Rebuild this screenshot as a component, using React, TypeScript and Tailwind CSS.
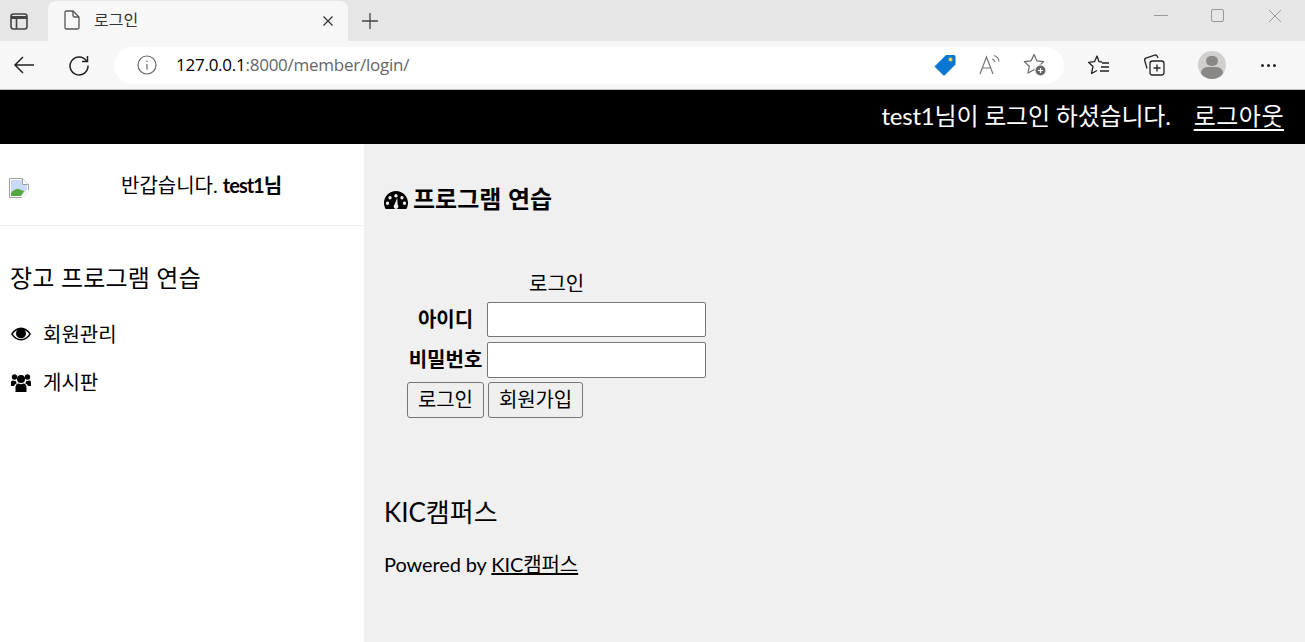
const latin = "font-['Lato','Noto_Sans_CJK_KR',sans-serif]";
const ui = "font-['Open_Sans','Noto_Sans_CJK_KR',sans-serif]";
const plain = "font-['Liberation_Sans','Noto_Sans_CJK_KR',sans-serif]";

const TabStrip = () => (
  <div className="h-[41px] bg-[#e6e6e6] flex items-end">
    <div className="w-12 h-[41px] flex items-center pl-[9px]">
      <svg width="20" height="20" viewBox="0 0 20 20" fill="none" stroke="#444" strokeWidth="1.6">
        <rect x="2" y="3" width="16" height="15" rx="2.5" />
        <path d="M2 6.5h16" strokeWidth="3" />
        <path d="M7.5 7v11" />
      </svg>
    </div>
    <div className="w-[300px] h-[40px] bg-[#f7f7f7] rounded-t-lg flex items-center">
      <svg className="ml-[15px] mb-[2px]" width="18" height="20" viewBox="0 0 18 20" fill="none" stroke="#555" strokeWidth="1.3">
        <path d="M2 2.5a1.5 1.5 0 0 1 1.5-1.5h6.5l6 6v10.500a1.500 1.500 0 0 1-1.500 1.500h-11a1.500 1.500 0 0 1-1.500-1.500z" />
        <path d="M10 1v4.500a1.500 1.500 0 0 0 1.500 1.500h4.500" />
      </svg>
      <span className={`ml-[13px] text-[16px] text-[#333] ${plain}`}>로그인</span>
      <svg className="ml-auto mr-[14px]" width="12" height="12" viewBox="0 0 12 12" stroke="#333" strokeWidth="1.2">
        <path d="M1.500 1.500l9 9M10.500 1.500l-9 9" />
      </svg>
    </div>
    <div className="w-[44px] h-[41px] flex items-center justify-center">
      <svg width="18" height="18" viewBox="0 0 18 18" stroke="#444" strokeWidth="1.3">
        <path d="M9 1v16M1 9h16" />
      </svg>
    </div>
    <div className="ml-auto h-[41px] flex items-start pr-[2px]">
      <div className="w-[57px] h-[31px] flex items-center justify-center">
        <div className="w-[14px] h-px bg-[#999]" />
      </div>
      <div className="w-[57px] h-[31px] flex items-center justify-center">
        <div className="w-[13px] h-[13px] border border-[#999] rounded-[2px]" />
      </div>
      <div className="w-[57px] h-[31px] flex items-center justify-center">
        <svg width="14" height="14" viewBox="0 0 14 14" stroke="#999" strokeWidth="1">
          <path d="M1 1l12 12M13 1L1 13" />
        </svg>
      </div>
    </div>
  </div>
);

const Toolbar = () => (
  <div className="h-[49px] bg-[#f7f7f7] border-b border-[#bdbdbd] flex items-center">
    <div className="w-12 flex justify-center">
      <svg width="22" height="20" viewBox="0 0 22 20" fill="none" stroke="#222" strokeWidth="1.500">
        <path d="M21 10H2M10 2l-8 8 8 8" />
      </svg>
    </div>
    <div className="w-[62px] flex justify-center">
      <svg width="22" height="22" viewBox="0 0 22 22" fill="none" stroke="#222" strokeWidth="1.500">
        <path d="M18.500 7a9 9 0 1 0 1.500 4.500" />
        <path d="M19.500 2v5.500h-5.500" />
      </svg>
    </div>
    <div className="w-[950px] h-[37px] ml-[4px] bg-white rounded-full flex items-center">
      <svg className="ml-[23px]" width="20" height="20" viewBox="0 0 20 20" fill="none" stroke="#666" strokeWidth="1.200">
        <circle cx="10" cy="10" r="9" />
        <path d="M10 9v5.500M10 5.500v1.500" />
      </svg>
      <span className={`ml-[19px] text-[17px] tracking-[-0.25px] ${ui}`}>
        <span className="text-black">127.0.0.1</span>
        <span className="text-[#666]">:8000/member/login/</span>
      </span>
      <div className="ml-auto flex items-center">
        <svg width="24" height="24" viewBox="0 0 24 24">
          <path d="M13 2h8a1.500 1.500 0 0 1 1.500 1.500v8L11 23 1.500 13.500z" fill="#0a78d2" />
          <circle cx="17.500" cy="6.500" r="2" fill="#f6d04d" />
        </svg>
        <svg className="ml-[22px]" width="22" height="22" viewBox="0 0 22 22" fill="none" stroke="#777" strokeWidth="1.200">
          <path d="M1 20L7.500 3 14 20M3.500 14h8" />
          <path d="M13 5a4 4 0 0 1 3 3M15 1.500a7 7 0 0 1 5 6" />
        </svg>
        <svg className="ml-[22px] mr-[17px]" width="24" height="24" viewBox="0 0 24 24" fill="none" stroke="#666" strokeWidth="1.200">
          <path d="M11 1.500l2.900 6.300 6.800.800-5 4.700 1.300 6.700-6-3.300-6 3.300 1.300-6.700-5-4.700 6.800-.800z" strokeLinejoin="round" />
          <circle cx="17.500" cy="17.500" r="6" fill="#fff" stroke="none" />
          <circle cx="17.500" cy="17.500" r="5" fill="#666" stroke="none" />
          <path d="M17.500 15v5M15 17.500h5" stroke="#fff" />
        </svg>
      </div>
    </div>
    <svg className="ml-[23px]" width="24" height="22" viewBox="0 0 24 22" fill="none" stroke="#222" strokeWidth="1.300">
      <path d="M15 8l-3-.300L10 2 7.500 7.700 1.500 8.300 6 12.500 4.500 19.500 10 16.500" strokeLinejoin="round" />
      <path d="M15 9h7M14 13h8M13 17h9" />
    </svg>
    <svg className="ml-[31px]" width="24" height="24" viewBox="0 0 24 24" fill="none" stroke="#222" strokeWidth="1.300">
      <rect x="8" y="8" width="14" height="14" rx="2.500" />
      <path d="M15 11.500v7M11.500 15h7" />
      <path d="M16 5l-.800-1.800a2 2 0 0 0-2.500-1L4 5.200a2 2 0 0 0-1.200 2.500L5 15.500" />
    </svg>
    <div className="ml-[32px] w-[28px] h-[28px] rounded-full bg-[#d2d0ce] overflow-hidden flex flex-col items-center">
      <div className="mt-[5px] w-[12px] h-[12px] rounded-full bg-[#8a8886]" />
      <div className="mt-[1px] w-[22px] h-[14px] rounded-full bg-[#8a8886]" />
    </div>
    <div className="ml-[35px] flex gap-[3px]">
      <div className="w-[3px] h-[3px] rounded-full bg-[#222]" />
      <div className="w-[3px] h-[3px] rounded-full bg-[#222]" />
      <div className="w-[3px] h-[3px] rounded-full bg-[#222]" />
    </div>
  </div>
);

const BrokenImage = () => (
  <svg width="20" height="20" viewBox="0 0 20 20">
    <path d="M.5.500h13l6 6v7l-6 6h-13z" fill="#fff" stroke="#a0a0a0" />
    <path d="M2 2h11v5h5v5l-6 6H2z" fill="#c8daf7" />
    <path d="M2 18v-3c3-4 7-5 10-3l3 1-3 5z" fill="#52a83c" />
    <path d="M13.500.500v6h6" fill="#fff" stroke="#a0a0a0" />
    <path d="M19.500 12l-7 7.500" stroke="#fff" strokeWidth="2" />
  </svg>
);

const EyeIcon = () => (
  <svg width="20" height="14" viewBox="0 0 20 14">
    <path
      fillRule="evenodd"
      d="M0 7C2.500 2.700 6 .500 10 .500S17.500 2.700 20 7c-2.500 4.300-6 6.500-10 6.500S2.500 11.300 0 7zm1.800 0C4 10.300 6.800 12 10 12s6-1.700 8.200-5C16.800 5 15.200 3.700 13.600 2.900a5 5 0 1 1-7.200 0C4.800 3.700 3.200 5 1.800 7z"
    />
    <circle cx="8.300" cy="4.600" r="1.300" fill="#000" />
  </svg>
);

const UsersIcon = () => (
  <svg width="20" height="19" viewBox="0 0 20 19">
    <circle cx="10" cy="6" r="4" />
    <circle cx="3.500" cy="4" r="2.700" />
    <circle cx="16.500" cy="4" r="2.700" />
    <path d="M4.500 19v-4.500C4.500 11.700 6 10.500 7.500 10.500c1.500 1 3.500 1 5 0 1.500 0 3 1.200 3 4V19z" />
    <path d="M0 13V9.500C0 8 1 7.500 2 7.500c.8.500 1.700.500 2.500.300.200 1 .700 1.800 1.300 2.400C4 11 3.300 12 3.200 13z" />
    <path d="M20 13V9.500C20 8 19 7.500 18 7.500c-.800.500-1.700.500-2.500.300-.200 1-.700 1.800-1.300 2.400 1.800.800 2.500 1.800 2.600 2.800z" />
  </svg>
);

const GaugeIcon = () => (
  <svg width="24" height="18" viewBox="0 0 24 18" className="shrink-0">
    <path
      fillRule="evenodd"
      d="M12 0C5.400 0 0 5.400 0 12c0 2.200.600 4.200 1.600 6h20.800c1-1.800 1.600-3.800 1.600-6 0-6.600-5.400-12-12-12zM12 3a1.700 1.700 0 1 1 0 3.400A1.700 1.700 0 0 1 12 3zM6 5a1.700 1.700 0 1 1 0 3.400A1.700 1.700 0 0 1 6 5zm12 0a1.700 1.700 0 1 1 0 3.400A1.700 1.700 0 0 1 18 5zM3.500 10.500a1.700 1.700 0 1 1 0 3.400 1.700 1.700 0 0 1 0-3.400zm17 0a1.700 1.700 0 1 1 0 3.400 1.700 1.700 0 0 1 0-3.400zM13.200 7l.500 7a2.300 2.300 0 1 1-3.400 0z"
    />
  </svg>
);

const Sidebar = () => (
  <nav className={`w-[364px] shrink-0 bg-white text-black ${latin}`}>
    <div className="h-[82px] border-b border-[#eeeeee] flex pl-[9px] pt-[34px]">
      <BrokenImage />
      <div className="ml-[92px] -mt-[8px] text-[20px] leading-[30px] whitespace-nowrap">
        반갑습니다. <strong className="font-bold tracking-[-1px]">test1님</strong>
      </div>
    </div>
    <h5 className="mt-[36px] ml-[10px] text-[24px] leading-[32px] tracking-[0.2px]">장고 프로그램 연습</h5>
    <ul className="mt-[16px] ml-[11px] text-[20px]">
      <li className="h-[48px] flex items-center">
        <EyeIcon />
        <span className="ml-[12px]">회원관리</span>
      </li>
      <li className="h-[48px] flex items-center">
        <UsersIcon />
        <span className="ml-[12px]">게시판</span>
      </li>
    </ul>
  </nav>
);

const inputClass = "w-[219px] bg-white border border-[#767676] rounded-[2px]";
const buttonClass = `h-[36px] px-[10px] bg-[#efefef] border border-[#767676] rounded-[3px] text-[20px] leading-[30px] text-black whitespace-nowrap tracking-[-0.1px] ${plain}`;

const LoginForm = () => (
  <div className={`mt-[55px] ml-[22px] w-[320px] text-[20px] text-black ${plain}`}>
    <div className="ml-[123px] h-[27px] leading-[27px]">로그인</div>
    <div className="mt-[4px] flex items-center">
      <label className="w-[81px] pr-[2px] text-center font-bold">아이디</label>
      <input className={`h-[35px] ${inputClass}`} />
    </div>
    <div className="mt-[5px] flex items-center">
      <label className="w-[81px] pr-[2px] text-center font-bold whitespace-nowrap">비밀번호</label>
      <input className={`h-[36px] ${inputClass}`} />
    </div>
    <div className="mt-[4px] flex gap-[4px] ml-px">
      <button className={buttonClass}>로그인</button>
      <button className={buttonClass}>회원가입</button>
    </div>
  </div>
);

export default function App() {
  return (
    <div className="h-[642px] w-[1305px] overflow-hidden flex flex-col">
      <TabStrip />
      <Toolbar />
      <div className={`h-[54px] pb-[3px] bg-black text-white flex items-center justify-end pr-[21px] text-[24px] ${latin}`}>
        <span className="tracking-[-0.2px]">test1님이 로그인 하셨습니다.</span>
        <a className="ml-[23px] underline underline-offset-4 tracking-[0.5px]">로그아웃</a>
      </div>
      <div className="flex flex-1 min-h-0">
        <Sidebar />
        <main className={`flex-1 bg-[#f0f0f0] pl-[20px] text-black ${latin}`}>
          <h5 className={`mt-[39px] flex items-center text-[24px] leading-[33px] font-bold ${plain}`}>
            <GaugeIcon />
            <span className="ml-[5px]">프로그램 연습</span>
          </h5>
          <LoginForm />
          <div className="mt-[76px] text-[26px] leading-[36px]">KIC캠퍼스</div>
          <p className="mt-[21px] text-[20px] leading-[27px] tracking-[-0.1px]">
            Powered by <a className="underline">KIC캠퍼스</a>
          </p>
        </main>
      </div>
    </div>
  );
}
